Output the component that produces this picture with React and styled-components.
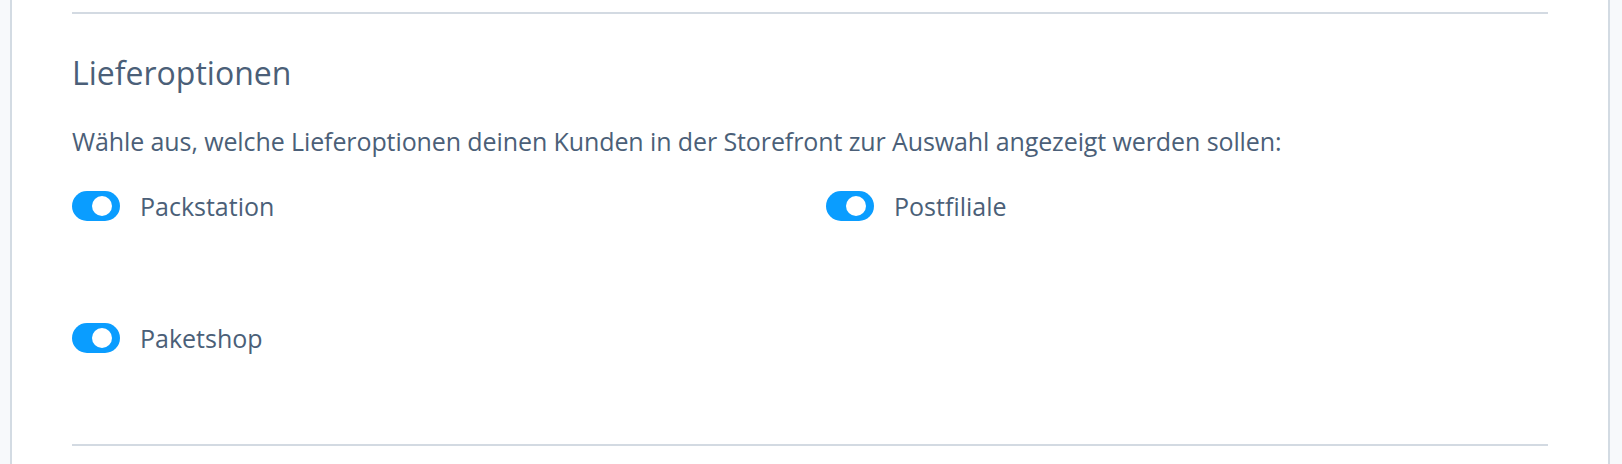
import styled, { createGlobalStyle } from "styled-components";

const GlobalStyle = createGlobalStyle`
  html, body {
    margin: 0;
    padding: 0;
    background-color: #f7f9fb;
  }
  body {
    font-family: "Open Sans", "Noto Sans", sans-serif;
  }
`;

const Page = styled.div`
  padding: 0 12px 0 10px;
  height: 464px;
  overflow: hidden;
`;

const Panel = styled.div`
  background-color: #fff;
  border-left: 2px solid #d3dbe3;
  border-right: 2px solid #d3dbe3;
  padding: 12px 60px 0;
  height: 100%;
  box-sizing: border-box;
`;

const Divider = styled.div`
  height: 2px;
  background-color: #d3dae2;
  margin-top: ${(p) => p.$top || 0}px;
`;

const Title = styled.h2`
  margin: 39px 0 0;
  font-size: 32px;
  line-height: 40px;
  font-weight: 400;
  color: #4b5f78;
`;

const Description = styled.p`
  margin: 32px 0 0;
  font-size: 25px;
  line-height: 32px;
  letter-spacing: -0.1px;
  color: #4b5f78;
`;

const Options = styled.div`
  display: grid;
  grid-template-columns: 1fr 1fr;
  column-gap: 32px;
  row-gap: 102px;
  margin-top: 34px;
`;

const Option = styled.label`
  display: flex;
  align-items: center;
  gap: 20px;
  height: 30px;
  font-size: 25px;
  color: #4b5f78;
  cursor: pointer;
`;

const Toggle = styled.span`
  position: relative;
  flex: 0 0 auto;
  width: 48px;
  height: 30px;
  border-radius: 15px;
  background-color: ${(p) => (p.$on ? "#0a9dff" : "#cfd8e1")};

  &::after {
    content: "";
    position: absolute;
    top: 5px;
    left: ${(p) => (p.$on ? "20px" : "6px")};
    width: 20px;
    height: 20px;
    border-radius: 50%;
    background-color: #fff;
  }
`;

const options = [
  { key: "packstation", label: "Packstation" },
  { key: "postfiliale", label: "Postfiliale" },
  { key: "paketshop", label: "Paketshop" },
];

function App() {
  return (
    <>
      <GlobalStyle />
      <Page>
        <Panel>
          <Divider />
          <Title>Lieferoptionen</Title>
          <Description>
            Wähle aus, welche Lieferoptionen deinen Kunden in der Storefront zur Auswahl angezeigt werden sollen:
          </Description>
          <Options>
            {options.map((o) => (
              <Option key={o.key}>
                <Toggle $on />
                {o.label}
              </Option>
            ))}
          </Options>
          <Divider $top={91} />
        </Panel>
      </Page>
    </>
  );
}

export default App;
